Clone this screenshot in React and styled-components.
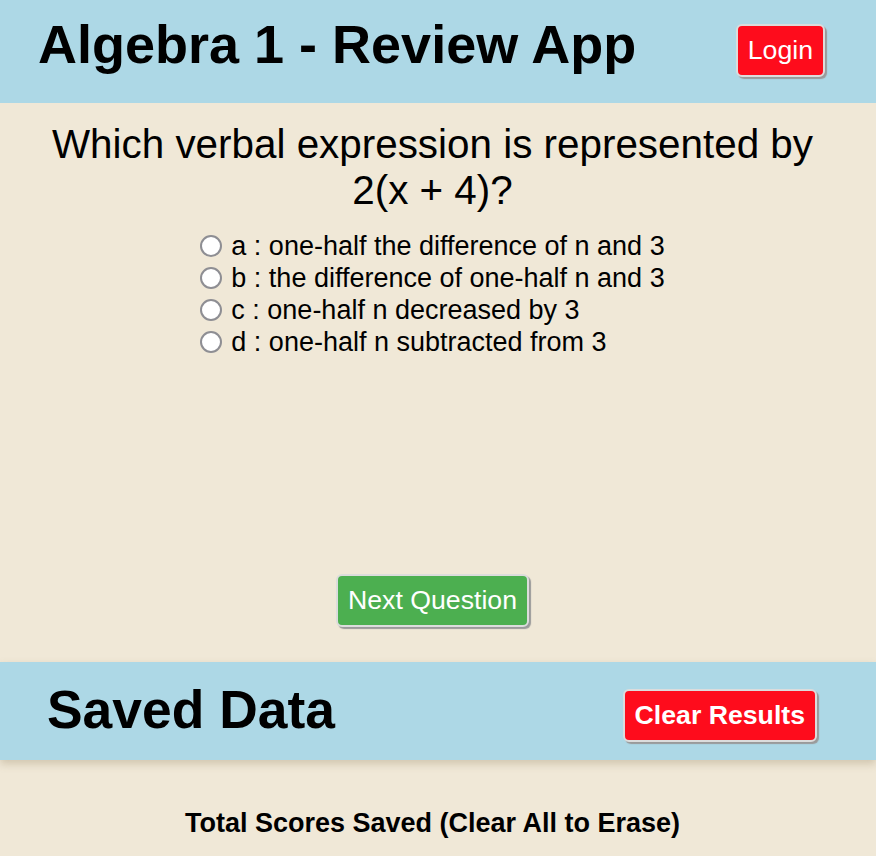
import React, { useState } from "react";
import styled, { createGlobalStyle } from "styled-components";

const GlobalStyle = createGlobalStyle`
  html, body {
    margin: 0;
    padding: 0;
    background: #f0e8d7;
    font-family: "Liberation Sans", Arial, sans-serif;
    color: #000;
  }
`;

const options = [
  { key: "a", text: "one-half the difference of n and 3" },
  { key: "b", text: "the difference of one-half n and 3" },
  { key: "c", text: "one-half n decreased by 3" },
  { key: "d", text: "one-half n subtracted from 3" },
];

const App = () => {
  const [choice, setChoice] = useState(null);

  return (
    <Page>
      <GlobalStyle />
      <TopBar>
        <Title>Algebra 1 - Review App</Title>
        <Button $color="#fe0c1c">Login</Button>
      </TopBar>

      <Quiz>
        <Question>
          Which verbal expression is represented by
          <br />
          2(x + 4)?
        </Question>
        <Choices>
          {options.map((o) => (
            <Choice key={o.key}>
              <Radio
                type="radio"
                name="answer"
                checked={choice === o.key}
                onChange={() => setChoice(o.key)}
              />
              {o.key} : {o.text}
            </Choice>
          ))}
        </Choices>
        <Button $color="#4caf50">Next Question</Button>
      </Quiz>

      <SavedBar>
        <SavedTitle>Saved Data</SavedTitle>
        <Button $color="#fe0c1c" $bold>
          Clear Results
        </Button>
      </SavedBar>

      <Totals>Total Scores Saved (Clear All to Erase)</Totals>
    </Page>
  );
};

export default App;

const Page = styled.div`
  width: 100%;
  min-height: 856px;
  background: #f0e8d7;
`;

const TopBar = styled.header`
  height: 103px;
  box-sizing: border-box;
  background: #add8e6;
  display: flex;
  align-items: flex-start;
  justify-content: space-between;
  padding: 0 51px 0 38px;

  & > button {
    margin-top: 24px;
  }
`;

const Title = styled.h1`
  margin: 13px 0 0;
  font-size: 54px;
  font-weight: bold;
  line-height: normal;
`;

const Button = styled.button`
  font-family: "Liberation Sans", Arial, sans-serif;
  font-size: 26.67px;
  font-weight: ${(p) => (p.$bold ? "bold" : "normal")};
  line-height: normal;
  color: #fff;
  background: ${(p) => p.$color};
  border: 2px solid #dcdcdc;
  border-radius: 6px;
  box-shadow: 2px 2px 1px #9a9a9a;
  padding: 9px 10px;
  cursor: pointer;
`;

const Quiz = styled.main`
  display: flex;
  flex-direction: column;
  align-items: center;
  padding: 18px 11px 0 0;
  height: 523px;
  box-sizing: border-box;

  & > button {
    margin-top: 216px;
  }
`;

const Question = styled.div`
  font-size: 40.4px;
  line-height: 46px;
  text-align: center;
`;

const Choices = styled.div`
  margin-top: 17px;
  display: flex;
  flex-direction: column;
  font-size: 27px;
  line-height: 32px;
`;

const Choice = styled.label`
  display: flex;
  align-items: center;
  cursor: pointer;
`;

const Radio = styled.input`
  appearance: none;
  width: 22px;
  height: 22px;
  margin: 0 9px 0 0;
  border: 2.5px solid #8e8e93;
  border-radius: 50%;
  background: #fff;
  box-sizing: border-box;
  cursor: pointer;

  &:checked {
    border: 6px solid #0a7aff;
  }
`;

const SavedBar = styled.section`
  margin-top: 36px;
  height: 98px;
  box-sizing: border-box;
  background: #add8e6;
  display: flex;
  align-items: flex-start;
  justify-content: space-between;
  padding: 0 59px 0 47px;
  box-shadow: 0 4px 8px rgba(120, 100, 60, 0.25);
  position: relative;

  & > button {
    margin-top: 27px;
  }
`;

const SavedTitle = styled.h2`
  margin: 17px 0 0;
  font-size: 53.4px;
  font-weight: bold;
  line-height: normal;
`;

const Totals = styled.h4`
  margin: 48px 11px 0 0;
  text-align: center;
  font-size: 27px;
  font-weight: bold;
  line-height: normal;
`;
